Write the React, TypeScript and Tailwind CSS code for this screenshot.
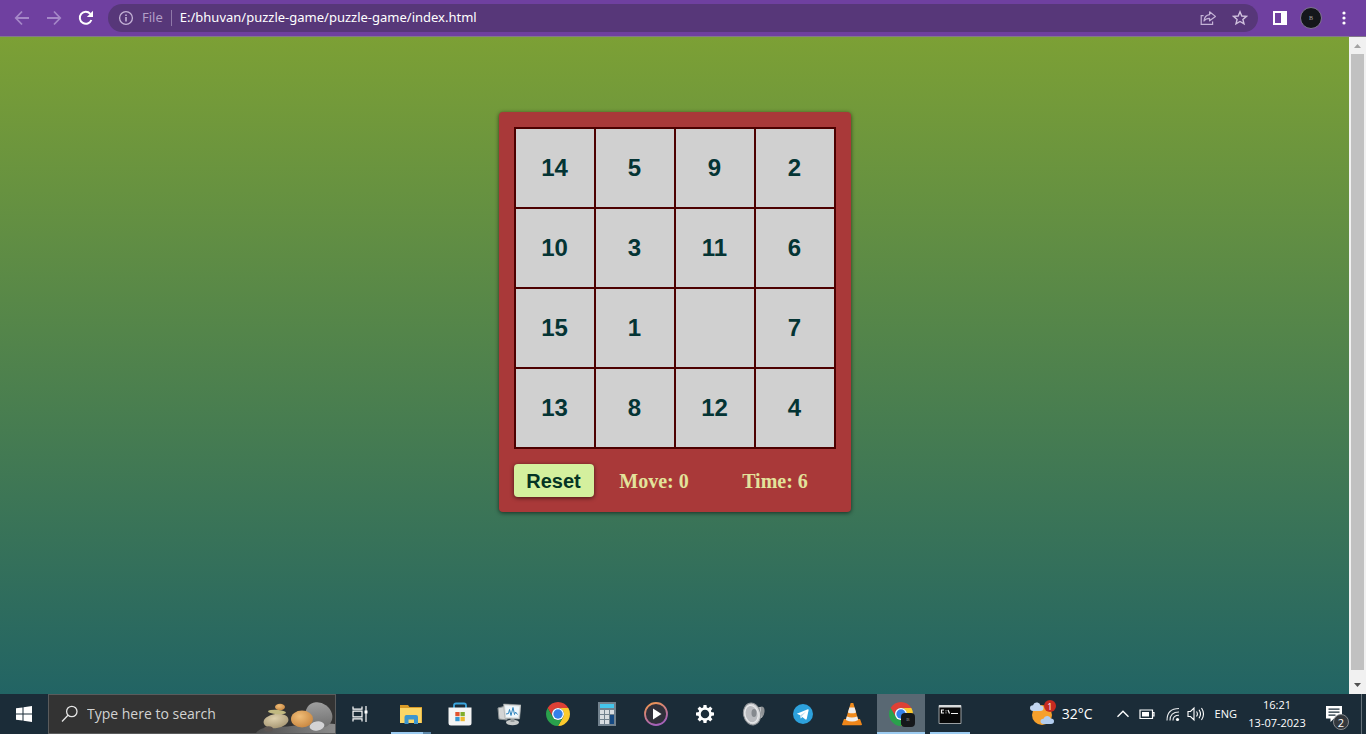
import { useState } from "react";
import type { ReactNode } from "react";

const START_TILES = [14, 5, 9, 2, 10, 3, 11, 6, 15, 1, 0, 7, 13, 8, 12, 4];

function BrowserBar() {
  return (
    <header className="flex h-[37px] shrink-0 items-center border-b border-[#82788c] bg-[#6f40a0] pr-3.5 pl-3 font-['Noto_Sans',sans-serif]">
      <nav className="flex gap-3" aria-label="Browser navigation">
        <button type="button" aria-label="Back" className="grid size-5 place-items-center text-[#a587c8]">
          <svg viewBox="0 0 16 16" className="size-4" fill="none" stroke="currentColor" strokeWidth="1.8">
            <path d="M15 8H2M8 1.5 1.8 8 8 14.5" />
          </svg>
        </button>
        <button type="button" aria-label="Forward" className="grid size-5 place-items-center text-[#a587c8]">
          <svg viewBox="0 0 16 16" className="size-4" fill="none" stroke="currentColor" strokeWidth="1.8">
            <path d="M1 8h13M8 1.5 14.2 8 8 14.5" />
          </svg>
        </button>
        <button type="button" aria-label="Reload" className="grid size-5 place-items-center text-white">
          <svg viewBox="0 0 16 16" className="size-4">
            <path d="M13.4 10A6 6 0 1 1 12.3 3.8" fill="none" stroke="currentColor" strokeWidth="2" />
            <path d="M15 .8V7H8.8z" fill="currentColor" />
          </svg>
        </button>
      </nav>

      <div className="ml-3 flex h-7 flex-1 items-center rounded-full bg-[#573779] pr-2.5 pl-2.5">
        <svg viewBox="0 0 16 16" className="size-4 shrink-0 text-[#c4b2d6]" aria-hidden="true">
          <circle cx="8" cy="8" r="6.4" fill="none" stroke="currentColor" strokeWidth="1.3" />
          <path d="M7.2 7h1.6v4.5H7.2zM7.2 4.4h1.6V6H7.2z" fill="currentColor" />
        </svg>
        <label htmlFor="address" className="ml-2 text-[13px] text-[#b39fc7]">
          File
        </label>
        <span className="ml-2 h-4 w-px bg-[#8f78a8]" />
        <input
          id="address"
          type="text"
          defaultValue="E:/bhuvan/puzzle-game/puzzle-game/index.html"
          className="ml-2 min-w-0 flex-1 bg-transparent text-[13px] text-white outline-none"
        />
        <button type="button" aria-label="Share this page" className="text-[#c4b2d6]">
          <svg viewBox="0 0 16 16" className="size-4" fill="none" stroke="currentColor" strokeWidth="1.2">
            <path d="M3.6 5.6H1.2v8.8h11.4v-3" />
            <path d="M9.6 1.800 15.400 6.400l-5.800 4.400V8.400c-2.700 0-4.300.8-5.600 2.600.300-3.300 2.200-5.800 5.600-6.300z" strokeLinejoin="round" />
          </svg>
        </button>
        <button type="button" aria-label="Bookmark this page" className="ml-4 text-[#d0c1de]">
          <svg viewBox="0 0 16 16" className="size-4" fill="none" stroke="currentColor" strokeWidth="1.4">
            <path d="m8 1.800 1.800 4.200 4.600.4-3.500 3 1.100 4.500L8 11.500l-4 2.400 1.100-4.500-3.500-3 4.600-.4z" />
          </svg>
        </button>
      </div>

      <button type="button" aria-label="Side panel" className="ml-3.5 text-white">
        <svg viewBox="0 0 16 16" className="size-4">
          <path d="M1 1h14v14H1zM3 3v10h6V3z" fill="currentColor" fillRule="evenodd" />
        </svg>
      </button>
      <button
        type="button"
        aria-label="Profile"
        className="ml-3 grid size-[22px] place-items-center rounded-full border border-[#7f7590] bg-[#14161a] font-['Liberation_Serif',serif] text-[6px] text-[#a5a5a5]"
      >
        B
      </button>
      <button type="button" aria-label="Menu" className="ml-3.5 text-white">
        <svg viewBox="0 0 16 16" className="size-4" fill="currentColor">
          <circle cx="8" cy="3" r="1.600" />
          <circle cx="8" cy="8" r="1.600" />
          <circle cx="8" cy="13" r="1.600" />
        </svg>
      </button>
    </header>
  );
}

function Game() {
  const [tiles, setTiles] = useState(START_TILES);
  const [moves, setMoves] = useState(0);

  const slide = (index: number) => {
    const empty = tiles.indexOf(0);
    const rows = Math.abs(Math.floor(index / 4) - Math.floor(empty / 4));
    const columns = Math.abs((index % 4) - (empty % 4));
    if (rows + columns !== 1) return;
    const next = [...tiles];
    next[empty] = tiles[index];
    next[index] = 0;
    setTiles(next);
    setMoves(moves + 1);
  };

  const reset = () => {
    setTiles(START_TILES);
    setMoves(0);
  };

  return (
    <section className="rounded bg-[#a93939] p-[15px] shadow-[0_1px_4px_rgba(0,0,0,0.6)]">
      <div className="grid grid-cols-[repeat(4,78px)] gap-0.5 bg-[#4d0000] p-0.5">
        {tiles.map((tile, index) => (
          <button
            key={tile}
            type="button"
            aria-label={tile ? undefined : "Empty"}
            onClick={() => slide(index)}
            className="h-[78px] bg-[#d0d0d0] font-['Liberation_Sans',sans-serif] text-2xl font-bold text-[#043434]"
          >
            {tile || ""}
          </button>
        ))}
      </div>
      <div className="mt-[15px] grid grid-cols-[80px_1fr_1fr] items-center text-center font-['Liberation_Serif',serif] text-xl font-bold text-[#e3e39b]">
        <button
          type="button"
          onClick={reset}
          className="h-[33px] rounded bg-[#d4f09e] font-['Liberation_Sans',sans-serif] text-[#043424] shadow-[0_1px_4px_rgba(0,0,0,0.6)]"
        >
          Reset
        </button>
        <p>Move: {moves}</p>
        <p>Time: 6</p>
      </div>
    </section>
  );
}

function ScrollBar() {
  return (
    <div className="flex w-[17px] shrink-0 flex-col items-center bg-[#f1f1f1]" aria-hidden="true">
      <svg viewBox="0 0 17 17" className="size-[17px] shrink-0">
        <path d="M5 11h7L8.500 7z" fill="#a3a3a3" />
      </svg>
      <div className="w-[13px] flex-1 bg-[#c1c1c1]" />
      <svg viewBox="0 0 17 24" className="h-6 w-[17px] shrink-0">
        <path d="M5 13h7l-3.500 4z" fill="#505050" />
      </svg>
    </div>
  );
}

function Stones() {
  return (
    <svg viewBox="0 0 80 38" className="h-[38px] w-20 shrink-0" aria-hidden="true">
      <defs>
        <linearGradient id="stone-grey" x1="0" y1="0" x2="1" y2="1">
          <stop offset="0" stopColor="#a8a8a8" />
          <stop offset="1" stopColor="#666" />
        </linearGradient>
        <radialGradient id="stone-orange" cx=".4" cy=".35" r=".7">
          <stop offset="0" stopColor="#efbd78" />
          <stop offset="1" stopColor="#c88640" />
        </radialGradient>
        <radialGradient id="stone-beige" cx=".45" cy=".3" r=".8">
          <stop offset="0" stopColor="#ded0ac" />
          <stop offset="1" stopColor="#a39370" />
        </radialGradient>
        <linearGradient id="stone-ground" x1="0" y1="0" x2="1" y2="0">
          <stop offset="0" stopColor="#4c4c4c" />
          <stop offset="1" stopColor="#8c8c8c" />
        </linearGradient>
      </defs>
      <path d="M1 38c3-4 8-6 18-6 24 0 35-5 61-3v9z" fill="url(#stone-ground)" />
      <ellipse cx="64" cy="20" rx="14" ry="12" fill="url(#stone-grey)" transform="rotate(35 64 20)" />
      <ellipse cx="47" cy="24" rx="11" ry="8.500" fill="url(#stone-orange)" />
      <ellipse cx="21" cy="26" rx="12.500" ry="7" fill="url(#stone-beige)" transform="rotate(-8 21 26)" />
      <ellipse cx="22" cy="17" rx="9" ry="2.200" fill="#c1b981" transform="rotate(4 22 17)" />
      <ellipse cx="25" cy="12" rx="5" ry="3.300" fill="url(#stone-orange)" />
      <ellipse cx="62" cy="31" rx="7.500" ry="4.500" fill="#d3d3d5" transform="rotate(-10 62 31)" />
      <ellipse cx="13.500" cy="34" rx="4.500" ry="2.800" fill="#5c5552" />
    </svg>
  );
}

function ChromeLogo() {
  return (
    <svg viewBox="0 0 24 24" className="size-6" aria-hidden="true">
      <path d="M1.610 6A12 12 0 0 1 22.390 6H12a6 6 0 0 0-5.200 9z" fill="#dd4035" />
      <path d="M22.390 6A12 12 0 0 1 12 24l5.200-9A6 6 0 0 0 12 6z" fill="#fcca2d" />
      <path d="M12 24A12 12 0 0 1 1.610 6L6.800 15a6 6 0 0 0 10.400 0z" fill="#2aa14c" />
      <circle cx="12" cy="12" r="6" fill="#fff" />
      <circle cx="12" cy="12" r="4.700" fill="#3480ea" />
    </svg>
  );
}

function TaskViewIcon() {
  return (
    <svg viewBox="0 0 18 18" className="size-[18px]" fill="none" stroke="#fff" strokeWidth="1.200">
      <path d="M2 1.500v2.700h9V1.500M2 16.500v-2.700h9v2.700M2 6.200h9v5.600H2zM15 1v16" />
      <path d="M13.500 5.500h3v3h-3z" fill="#fff" stroke="none" />
    </svg>
  );
}

function FolderIcon() {
  return (
    <svg viewBox="0 0 24 24" className="size-6">
      <path d="M1 3h8l1.500 2H23v16H1z" fill="#d99b27" />
      <path d="M1 6h21.500v15H1z" fill="#fbd667" />
      <path d="M5.500 22v-7q0-2 2-2h9.500q2 0 2 2v7h-4v-4.500H9.500V22z" fill="#3c96cf" />
    </svg>
  );
}

function StoreIcon() {
  return (
    <svg viewBox="0 0 24 24" className="size-6">
      <path d="M6 8V3.500Q6 1.500 8 1.500h8Q18 1.500 18 3.500V8" fill="none" stroke="#3ba5dd" strokeWidth="1.800" />
      <path d="M.5 5.500h23V21q0 2.500-2.500 2.500H3Q.5 23.500.5 21z" fill="#f4f4f4" />
      <path d="M7.300 10h4.300v4.200H7.300z" fill="#e2532e" />
      <path d="M12.500 10h4.300v4.200h-4.300z" fill="#80ad2c" />
      <path d="M7.300 15h4.300v4.200H7.300z" fill="#3697d2" />
      <path d="M12.500 15h4.300v4.200h-4.300z" fill="#eeb92f" />
    </svg>
  );
}

function MonitorIcon() {
  return (
    <svg viewBox="0 0 24 24" className="size-6">
      <path d="m1 6 8-2 1 14-8-1z" fill="#d3d5d5" stroke="#8b9294" />
      <ellipse cx="15.500" cy="20.500" rx="6.500" ry="2.700" fill="#c8cbca" />
      <path d="M13.500 15h4v5h-4z" fill="#989d9e" />
      <path d="m6.500 2 17.500 1-1.500 14-14.500-.5z" fill="#dbdddc" stroke="#9ea4a6" strokeWidth=".6" />
      <path d="m8 3.500 14.300.9-1.200 11-12-.4z" fill="#eef7fc" />
      <path d="m9 12 2.500-.5 1-4 1.500 6 2-8 1.500 7 1-2.500 2 2.500" fill="none" stroke="#3185bd" />
    </svg>
  );
}

function CalculatorIcon() {
  return (
    <svg viewBox="0 0 24 24" className="size-6">
      <path d="M3 0h18v24H3z" fill="#72828e" />
      <path d="M5 2h14v4H5z" fill="#44c6ec" />
      <path d="M5 8h4v4H5zM10 8h4v4h-4zM15 8h4v4h-4zM5 13h4v4H5zM10 13h4v4h-4zM5 18h4v4H5zM10 18h4v4h-4z" fill="#d8dde1" />
      <path d="M15 13h4v9h-4z" fill="#164a83" />
    </svg>
  );
}

function PlayerIcon() {
  return (
    <svg viewBox="0 0 24 24" className="size-6">
      <defs>
        <linearGradient id="player-ring" x1="0" y1="0" x2=".4" y2="1">
          <stop offset="0" stopColor="#f59a4b" />
          <stop offset="1" stopColor="#a562b8" />
        </linearGradient>
      </defs>
      <circle cx="12" cy="12" r="11" fill="#30303a" stroke="url(#player-ring)" strokeWidth="1.800" />
      <path d="M9 6.500v11l8.500-5.500z" fill="#fff" />
    </svg>
  );
}

function GearIcon() {
  const teeth = [0, 45, 90, 135, 180, 225, 270, 315];
  return (
    <svg viewBox="0 0 20 20" className="size-5">
      <circle cx="10" cy="10" r="5.500" fill="none" stroke="#fff" strokeWidth="2.500" />
      {teeth.map((angle) => (
        <path key={angle} d="M8.500 1h3l.4 3.500H8.100z" fill="#fff" transform={`rotate(${angle} 10 10)`} />
      ))}
    </svg>
  );
}

function SpeakerIcon() {
  return (
    <svg viewBox="0 0 24 24" className="size-6">
      <path d="m13 6 7-1.500q3 .5 2.500 5.500T19 16l-5 2z" fill="#8e9295" />
      <path d="m18 5 1 11" stroke="#d5d8da" />
      <ellipse cx="10" cy="12" rx="8.500" ry="11" fill="#d4d5d7" stroke="#8d9296" transform="rotate(-12 10 12)" />
      <ellipse cx="9.500" cy="12" rx="6.500" ry="8.800" fill="#b9bbbf" stroke="#e9eaec" transform="rotate(-12 10 12)" />
      <ellipse cx="12" cy="11" rx="2.500" ry="4" fill="#85898e" />
    </svg>
  );
}

function TelegramIcon() {
  return (
    <svg viewBox="0 0 20 20" className="size-5">
      <circle cx="10" cy="10" r="10" fill="#2da1dc" />
      <path d="m3.800 9.700 11-4.400q1-.2.800.9l-1.900 8.800q-.3.900-1.200.4L9.300 13l-1.500 1.500-.5-3.200z" fill="#fff" />
      <path d="m7.300 11.300 5.900-3.800-4.400 4.800-1 2.200z" fill="#b9dcf0" />
    </svg>
  );
}

function ConeIcon() {
  return (
    <svg viewBox="0 0 24 24" className="size-6">
      <path d="m4 17-2 5.500q0 .8 1 .8h18q1 0 1-.8L20 17z" fill="#ee861a" />
      <path d="M10.700 1h2.600l5 17q-6 3.500-12.600 0z" fill="#f08b1d" />
      <path d="M9.400 5.500h5.200l1.500 5q-4 1.700-8.200 0zM6.800 14.400q5 2 10.400 0l1 3.600q-6 3-12.400 0z" fill="#ededed" />
    </svg>
  );
}

function CommandIcon() {
  return (
    <svg viewBox="0 0 24 24" className="size-6">
      <path d="M1 3.500h22v18H1z" fill="#080808" stroke="#9ba0a3" />
      <path d="M1 3h22v2.500H1z" fill="#d8dadb" />
      <path d="M6 8H3.500v3H6M8 8.500v.8M8 10.500v.8M10 8l1.500 3.500M13 11.500h7" fill="none" stroke="#f4f4f4" strokeWidth="1.200" />
    </svg>
  );
}

function TaskButton({ label, active = false, children }: { label: string; active?: boolean; children: ReactNode }) {
  return (
    <button
      type="button"
      aria-label={label}
      className={`relative grid h-10 w-12 shrink-0 place-items-center ${active ? "bg-[#596873]" : ""}`}
    >
      {children}
    </button>
  );
}

function TaskBar() {
  return (
    <footer className="flex h-10 shrink-0 items-center bg-[#1b2c38] text-white">
      <button type="button" aria-label="Start" className="grid h-10 w-12 shrink-0 place-items-center">
        <svg viewBox="0 0 16 16" className="size-4" fill="#fff">
          <path d="m0 2.300 6.500-.9v6.100H0zM7.500 1.200 16 0v7.500H7.500zM0 8.500h6.500v6.100L0 13.700zM7.500 8.500H16V16l-8.500-1.200z" />
        </svg>
      </button>
      <div className="flex h-10 w-72 shrink-0 items-center border border-[#5a5b5c] bg-[#333333] pl-3">
        <svg viewBox="0 0 18 18" className="size-[18px] shrink-0" fill="none" stroke="#e6e6e6" strokeWidth="1.300">
          <circle cx="10.800" cy="6.500" r="5.200" />
          <path d="m7 10.300-6 6.200" />
        </svg>
        <input
          type="search"
          aria-label="Search"
          placeholder="Type here to search"
          className="ml-2 min-w-0 flex-1 bg-transparent text-sm outline-none placeholder:text-[#d2d2d2]"
        />
        <Stones />
      </div>
      <TaskButton label="Task view">
        <TaskViewIcon />
      </TaskButton>

      <div className="ml-[3px] flex gap-px">
        <TaskButton label="File Explorer">
          <FolderIcon />
          <span className="absolute bottom-0 left-1 flex h-0.5 w-10 bg-[#9ccbf0]">
            <span className="ml-auto w-2 bg-[#5d87a8]" />
          </span>
        </TaskButton>
        <TaskButton label="Store">
          <StoreIcon />
        </TaskButton>
        <TaskButton label="Task Manager">
          <MonitorIcon />
        </TaskButton>
        <TaskButton label="Chrome">
          <ChromeLogo />
        </TaskButton>
        <TaskButton label="Calculator">
          <CalculatorIcon />
        </TaskButton>
        <TaskButton label="Media Player">
          <PlayerIcon />
        </TaskButton>
        <TaskButton label="Settings">
          <GearIcon />
        </TaskButton>
        <TaskButton label="Sound">
          <SpeakerIcon />
        </TaskButton>
        <TaskButton label="Telegram">
          <TelegramIcon />
        </TaskButton>
        <TaskButton label="Media cone">
          <ConeIcon />
        </TaskButton>
        <TaskButton label="Chrome, open window" active>
          <ChromeLogo />
          <span className="absolute right-2.5 bottom-[7px] grid size-3.5 place-items-center rounded bg-[#15181b] font-['Liberation_Serif',serif] text-[5px] text-[#999]">
            B
          </span>
          <span className="absolute bottom-0 h-0.5 w-full bg-[#9ccbf0]" />
        </TaskButton>
        <TaskButton label="Command Prompt">
          <CommandIcon />
          <span className="absolute bottom-0 h-0.5 w-10 bg-[#9ccbf0]" />
        </TaskButton>
      </div>

      <div className="ml-auto flex h-10 items-center">
        <button type="button" className="flex items-center gap-2 text-sm">
          <span className="relative">
            <svg viewBox="0 0 24 24" className="size-6" aria-hidden="true">
              <circle cx="12" cy="13" r="10" fill="#f6a02c" />
              <path d="M3 9q-3-.3-3-3 0-2.500 3-2.700Q4-.2 7.500.6q2.500.6 3 2.900 3 0 3 2.800Q13.500 9 10.500 9z" fill="#c1d5ef" />
              <path d="M13.500 22q-3 0-3-2.700t3-2.600q1-3 4.200-2.600 2.300.3 3 2.500 3.300 0 3.300 2.700T21 22z" fill="#b2cdee" />
            </svg>
            <span className="absolute -top-0.5 -right-0.5 grid size-3 place-items-center rounded-full bg-[#c62b20] text-[9px] leading-none">
              1
            </span>
          </span>
          32°C
        </button>
        <button type="button" aria-label="Show hidden icons" className="ml-5.5">
          <svg viewBox="0 0 16 16" className="size-4" fill="none" stroke="#fff" strokeWidth="1.400">
            <path d="M2.500 10.800 8 5.300l5.500 5.500" />
          </svg>
        </button>
        <svg viewBox="0 0 16 16" className="ml-2 size-4" fill="none" stroke="#fff" strokeWidth="1.200" aria-label="Battery" role="img">
          <path d="M1 4h12.500v8.500H1zM13.500 6.500H15V10h-1.500" />
          <path d="M3 6h7v4.500H3z" fill="#fff" stroke="none" />
        </svg>
        <svg viewBox="0 0 16 16" className="ml-2.5 size-4" fill="none" stroke="#e6e9eb" strokeWidth="1.100" aria-label="Wi-Fi" role="img">
          <path d="M2 14.500Q2 2.500 14 2.500M5 14.500q0-8.500 9-8.500M8 14.500q0-5.200 6-5.200" />
          <circle cx="12.500" cy="13.500" r="1.600" fill="#fff" stroke="none" />
        </svg>
        <svg viewBox="0 0 18 16" className="ml-1.5 h-4 w-[18px]" fill="none" stroke="#fff" strokeWidth="1.100" aria-label="Volume" role="img">
          <path d="M1 5.500h2.500L7 2v12l-3.500-3.500H1zM9.500 5.500q1.800 2.500 0 5M12 3.800q3 4.200 0 8.400M14.500 2q4 6 0 12" />
        </svg>
        <button type="button" className="ml-2.5 text-[11px]">
          ENG
        </button>
        <time className="w-20 text-center text-[11px] leading-[18px]">
          16:21
          <br />
          13-07-2023
        </time>
        <button type="button" aria-label="Notifications" className="relative mr-3 ml-2 h-10 w-6">
          <svg viewBox="0 0 18 18" className="size-[18px]">
            <path d="M1 1h16v12.500H9L5.500 17v-3.500H1z" fill="#fff" />
            <path d="M3.500 4.200h11M3.500 7.200h11M3.500 10.200h7" stroke="#1b2c38" strokeWidth="1.200" />
          </svg>
          <span className="absolute right-0 bottom-1 grid size-4 place-items-center rounded-full border border-[#85898d] bg-[#33383d] text-[11px] leading-none">
            2
          </span>
        </button>
        <span className="mr-1 h-10 w-px bg-[#65717a]" />
      </div>
    </footer>
  );
}

export default function App() {
  return (
    <div className="flex h-screen flex-col overflow-hidden font-['Open_Sans','Noto_Sans',sans-serif]">
      <BrowserBar />
      <div className="flex min-h-0 flex-1">
        <main className="flex flex-1 items-start justify-center bg-linear-to-b/srgb from-[#7ca035] to-[#226464] pt-[75px]">
          <Game />
        </main>
        <ScrollBar />
      </div>
      <TaskBar />
    </div>
  );
}
